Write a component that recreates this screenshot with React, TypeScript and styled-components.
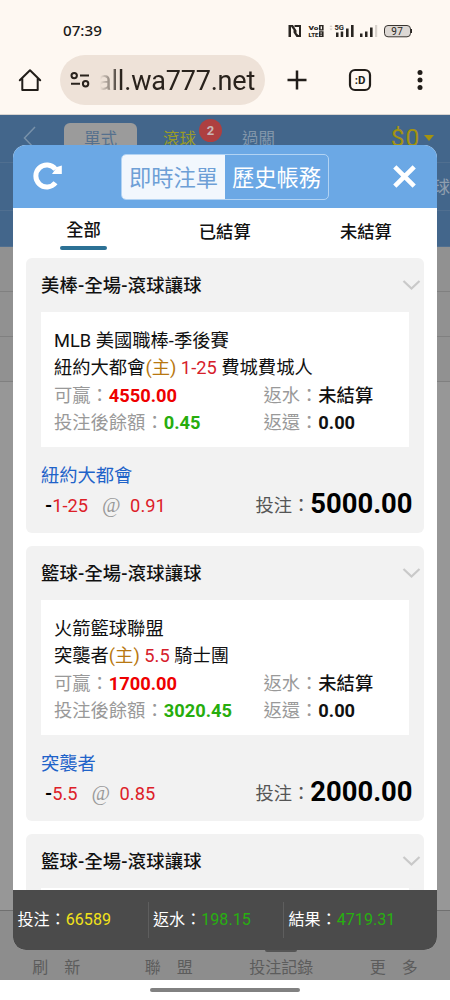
import React from "react";
import styled, { createGlobalStyle } from "styled-components";

const GlobalStyle = createGlobalStyle`
  * { box-sizing: border-box; }
  body { margin: 0; background: #fff; }
  #root { font-family: Roboto, "Noto Sans CJK TC", sans-serif; font-size: 18.3px; color: #111; }
`;

const Phone = styled.div`
  width: 450px;
  height: 1000px;
  display: flex;
  flex-direction: column;
  overflow: hidden;
  background: #fff;
`;

/* ---------- device and browser chrome ---------- */
const StatusBar = styled.div`
  height: 54px;
  padding: 7px 38px 0 63px;
  display: flex;
  align-items: center;
  justify-content: space-between;
  background: #fef8f2;
`;
const Clock = styled.span`
  margin-top: -1px;
  font-family: "Noto Sans", sans-serif;
  font-size: 15.2px;
  font-weight: 500;
  color: #1c1a18;
`;
const BrowserBar = styled.div`
  height: 61px;
  padding: 1px 0 0 18px;
  display: flex;
  align-items: flex-start;
  background: #fef8f2;
  border-bottom: 1px solid #d9d5d1;
`;
const UrlPill = styled.div`
  width: 205px;
  height: 50px;
  margin-left: 18px;
  padding-left: 10px;
  border-radius: 25px;
  background: #eee2d8;
  display: flex;
  align-items: center;
`;
const UrlText = styled.span`
  margin: 2px 0 0 7px;
  white-space: nowrap;
  font-size: 27px;
  line-height: 36px;
  letter-spacing: -0.2px;
  color: #29221c;
  mask-image: linear-gradient(90deg, transparent 3px, #000 24px);
`;
const BarIcon = styled.div<{ $left: number; $w: number }>`
  width: ${(p) => p.$w}px;
  height: 50px;
  margin-left: ${(p) => p.$left}px;
  display: flex;
  align-items: center;
  justify-content: center;
`;

/* ---------- page behind the dialog ---------- */
const Page = styled.main`
  position: relative;
  height: 865px;
  display: flex;
  flex-direction: column;
  background: #979797;
`;
const SiteBar = styled.div`
  height: 48px;
  display: flex;
  align-items: flex-start;
  padding-left: 22px;
  background: #43668b;
  border-bottom: 1px solid #506f90;
`;
const ModeTab = styled.div<{ $w: number; $on?: boolean; $color: string }>`
  width: ${(p) => p.$w}px;
  height: 38px;
  margin-top: 8px;
  border-radius: 6px;
  text-align: center;
  font-size: 16.5px;
  line-height: 34px;
  color: ${(p) => p.$color};
  background: ${(p) => (p.$on ? "#9b9b9b" : "transparent")};
`;
const TabLabel = styled.span`
  position: relative;
`;
const CountBadge = styled.span`
  position: absolute;
  top: -11px;
  right: -26px;
  width: 23px;
  height: 23px;
  border-radius: 50%;
  background: #ae3f40;
  color: #c9b5b5;
  font-size: 13px;
  font-weight: 700;
  line-height: 23px;
  text-align: center;
`;
const Balance = styled.div`
  margin-left: auto;
  padding: 8px 16px 0 0;
  display: flex;
  align-items: center;
  gap: 4px;
  font-size: 24.5px;
  line-height: 30px;
  letter-spacing: 0.8px;
  color: #a4930f;
`;
const SportRow = styled.div<{ $h: number }>`
  height: ${(p) => p.$h}px;
  padding-top: 8px;
  text-align: right;
  font-size: 17px;
  line-height: 32px;
  color: #8f9faf;
  background: #43668b;
  border-bottom: 1px solid #506f90;
  overflow: hidden;
`;
const MarketRow = styled.div`
  height: 45px;
  background: #919191;
  border-bottom: 1px solid #808080;
`;
const TabBar = styled.nav`
  height: 70px;
  margin-top: auto;
  padding: 38px 0 0;
  display: flex;
  background: #8d8d8d;
  border-top: 1px solid #707070;
`;
const NavItem = styled.div`
  flex: 1;
  text-align: center;
  white-space: pre;
  font-size: 16px;
  line-height: 37px;
  color: #5c5c5c;
`;
const NavMark = styled.span`
  position: absolute;
  left: 265px;
  bottom: 28px;
  width: 32px;
  height: 4px;
  border-radius: 2px;
  background: #555;
`;

/* ---------- betting slip dialog ---------- */
const Dialog = styled.section`
  position: absolute;
  left: 13px;
  top: 30px;
  width: 423.5px;
  height: 805px;
  display: flex;
  flex-direction: column;
  border-radius: 13px;
  overflow: hidden;
  background: #fff;
`;
const DialogHead = styled.header`
  flex: none;
  height: 62.5px;
  padding: 0 20px 0 20px;
  display: flex;
  align-items: center;
  background: #6ba8e5;
`;
const Segments = styled.div`
  width: 208px;
  height: 46px;
  margin: 1px 64px 0 58px;
  display: flex;
  border: 1px solid #b2d3f3;
  border-radius: 5px;
  overflow: hidden;
`;
const Segment = styled.div<{ $on?: boolean }>`
  flex: 1;
  text-align: center;
  font-size: 22.3px;
  line-height: 46px;
  color: ${(p) => (p.$on ? "#6e9fd6" : "#fff")};
  background: ${(p) => (p.$on ? "#f2f7fd" : "transparent")};
`;
const FilterRow = styled.div`
  flex: none;
  height: 50px;
  display: flex;
`;
const Filter = styled.div<{ $on?: boolean }>`
  flex: 1;
  display: flex;
  flex-direction: column;
  align-items: center;
  font-size: 17.3px;
  font-weight: 500;
  line-height: ${(p) => (p.$on ? 45 : 49)}px;
  color: #111;
`;
const Underline = styled.span`
  width: 47px;
  height: 4px;
  margin-top: -7px;
  border-radius: 2px;
  background: #2c7195;
`;
const BetList = styled.div`
  flex: 1;
  min-height: 0;
  padding: 0 13px;
  display: flex;
  flex-direction: column;
  gap: 13px;
  overflow: hidden;
`;
const Card = styled.article`
  flex: none;
  height: 275px;
  border-radius: 6px;
  padding: 0 15px 0 15px;
  background: #f2f2f2;
`;
const CardHead = styled.div`
  height: 54.5px;
  padding-bottom: 1px;
  margin-right: -12px;
  display: flex;
  align-items: center;
  justify-content: space-between;
  font-weight: 500;
  letter-spacing: 0.2px;
`;
const DetailBox = styled.div`
  height: 135px;
  padding: 14.5px 13px 10px;
  line-height: 27.5px;
  white-space: nowrap;
  background: #fff;
`;
const DetailRow = styled.div`
  display: flex;
  height: 27.5px;
`;
const DetailCell = styled.div<{ $w?: number }>`
  width: ${(p) => (p.$w ? `${p.$w}px` : "auto")};
  color: #999;
`;
const Ink = styled.span<{ $c: string; $bold?: boolean }>`
  color: ${(p) => p.$c};
  font-weight: ${(p) => (p.$bold ? 700 : 400)};
`;
const Pick = styled.div`
  height: 26px;
  margin-top: 15px;
  line-height: 27px;
  color: #1f63c9;
`;
const BetRow = styled.div`
  height: 36px;
  padding-left: 4px;
  margin: -3px -4px 0 0;
  display: flex;
  align-items: baseline;
  line-height: 36px;
`;
const AtSign = styled.span`
  width: 18px;
  margin: 0 10px 0 14px;
  font-family: "Liberation Serif", serif;
  font-style: italic;
  font-size: 20px;
  color: #999;
`;
const Stake = styled.span`
  margin-left: auto;
  color: #555;
`;
const StakeValue = styled.span`
  position: relative;
  top: 1px;
  font-size: 27.4px;
  font-weight: 700;
  color: #000;
`;
const Totals = styled.footer`
  flex: none;
  height: 60px;
  padding-top: 12px;
  display: flex;
  background: #4b4b4b;
`;
const Total = styled.div`
  width: 135.5px;
  height: 36px;
  padding-left: 4.5px;
  border-right: 1px solid #5e5e5e;
  font-size: 16.1px;
  line-height: 36px;
  white-space: nowrap;
  color: #fff;
  &:last-child { width: 150px; border-right: 0; }
`;
const GestureArea = styled.div`
  flex: 1;
  display: flex;
  justify-content: center;
  padding-top: 7.5px;
`;
const GestureBar = styled.span`
  width: 150px;
  height: 4px;
  border-radius: 2px;
  background: #818181;
`;

const StatusIcons = () => (
  <svg width="125" height="18" viewBox="287 21 125 18" fill="#292521">
    <path d="M288.5 24H293l3.500 5.500V33l-5.500-7.500V36h-2.500zM294.500 24h6.500v12h-4.500l-3-4.500V29l4.800 5h.7v-8h-4.500z" />
    <g fontFamily="Roboto" fontWeight="900">
      <text x="308.500" y="29.400" fontSize="5.800" textLength="10" lengthAdjust="spacingAndGlyphs">Vo</text>
      <text x="308.500" y="36.400" fontSize="5.800" textLength="10" lengthAdjust="spacingAndGlyphs">LTE</text>
      <text x="334.500" y="28.800" fontSize="7.800" fontWeight="700" textLength="9.500" lengthAdjust="spacingAndGlyphs">5G</text>
    </g>
    <path fillRule="evenodd" d="M319 24h4.600v5.500H319zm1.600 1.200v3h1.400v-3zM319 30.300h4.600V36H319zm1.400 1.200v1h1.500v-1zm0 2.200v1h1.500v-1z" />
    <path d="M329.500 26l1.500-2 1.500 2zm0 1.500h3l-1.500 2z" fill="#d6cfca" />
    <path d="M336 31.500h2.500V36H336zM340.700 30.500h2.500V36h-2.500zM346 27.500h2.600V36H346zM351 24h2.600v12H351z" />
    <path d="M360 32.500h2.500V36H360zM365 30.500h2.500V36H365zM370 26.500h2.600V36H370z" />
    <path d="M375 24h2.200v12H375z" fill="#d8d2cc" />
    <rect x="384.500" y="24.500" width="26" height="11.300" rx="3.500" fill="#ddd8d4" stroke="#393531" />
    <path d="M411 28h1v4h-1z" />
    <text x="391.300" y="33.800" fontFamily="Roboto" fontSize="10" textLength="11.500">97</text>
  </svg>
);

const Chevron = () => (
  <svg width="19" height="12" viewBox="0 0 19 12" fill="none" stroke="#c9c9c9" strokeWidth="2.2">
    <path d="M1.500 3 9.500 10.500 17.500 3" />
  </svg>
);

interface Bet {
  title: string;
  league: string;
  home: string;
  line: string;
  away: string;
  win: string;
  left: string;
  handicap: string;
  odds: string;
  stake: string;
}

const bets: Bet[] = [
  { title: "美棒-全場-滾球讓球", league: "MLB 美國職棒-季後賽", home: "紐約大都會", line: "1-25", away: "費城費城人", win: "4550.00", left: "0.45", handicap: "1-25", odds: "0.91", stake: "5000.00" },
  { title: "籃球-全場-滾球讓球", league: "火箭籃球聯盟", home: "突襲者", line: "5.5", away: "騎士團", win: "1700.00", left: "3020.45", handicap: "5.5", odds: "0.85", stake: "2000.00" },
];

const BetCard = ({ bet }: { bet: Bet }) => (
  <Card>
    <CardHead>{bet.title}<Chevron /></CardHead>
    <DetailBox>
      <DetailRow>{bet.league}</DetailRow>
      <DetailRow>
        <span>
          {bet.home}<Ink $c="#b87811">(主)</Ink> <Ink $c="#d6202b">{bet.line}</Ink> {bet.away}
        </span>
      </DetailRow>
      <DetailRow>
        <DetailCell $w={209.5}>可贏：<Ink $c="#ee0000" $bold>{bet.win}</Ink></DetailCell>
        <DetailCell>返水：<Ink $c="#111" style={{ fontWeight: 500 }}>未結算</Ink></DetailCell>
      </DetailRow>
      <DetailRow>
        <DetailCell $w={209.5}>投注後餘額：<Ink $c="#27ad0d" $bold>{bet.left}</Ink></DetailCell>
        <DetailCell>返還：<Ink $c="#111" $bold>0.00</Ink></DetailCell>
      </DetailRow>
    </DetailBox>
    <Pick>{bet.home}</Pick>
    <BetRow>
      <Ink $c="#000" $bold>-</Ink>
      <Ink $c="#dd2028">{bet.handicap}</Ink>
      <AtSign>@</AtSign>
      <Ink $c="#dd2028">{bet.odds}</Ink>
      <Stake>投注：<StakeValue>{bet.stake}</StakeValue></Stake>
    </BetRow>
  </Card>
);

export default function App() {
  return (
    <>
      <GlobalStyle />
      <Phone lang="zh-Hant">
        <StatusBar><Clock>07:39</Clock><StatusIcons /></StatusBar>
        <BrowserBar>
          <BarIcon $left={0} $w={24}>
            <svg width="24" height="24" viewBox="0 0 24 24" fill="none" stroke="#211d19" strokeWidth="2" strokeLinejoin="round" strokeLinecap="round">
              <path d="M1.800 12.200 12 2.200l10.200 10M4.300 10.500V22h15.400V10.500" />
            </svg>
          </BarIcon>
          <UrlPill>
            <svg width="20" height="18" viewBox="0 0 20 18" fill="none" stroke="#29221c" strokeWidth="2">
              <circle cx="4.2" cy="4.6" r="2.7" /><circle cx="15.6" cy="12.8" r="2.7" />
              <path d="M10 4.600h9M1 12.800h9" />
            </svg>
            <UrlText>all.wa777.net</UrlText>
          </UrlPill>
          <BarIcon $left={20} $w={24}>
            <svg width="22" height="22" viewBox="0 0 22 22" fill="none" stroke="#211d19" strokeWidth="2.5"><path d="M1.500 11h19M11 1.500v19" /></svg>
          </BarIcon>
          <BarIcon $left={39} $w={24}>
            <svg width="24" height="24" viewBox="0 0 24 24" fill="none" stroke="#211d19" strokeWidth="2.2">
              <rect x="2" y="2" width="20" height="20" rx="5" />
              <text x="12" y="16" textAnchor="middle" fontFamily="Roboto" fontWeight="700" fontSize="11.5" fill="#211d19" stroke="none">:D</text>
            </svg>
          </BarIcon>
          <BarIcon $left={36} $w={24}>
            <svg width="8" height="22" viewBox="0 0 8 22" fill="#211d19"><circle cx="4" cy="3.4" r="2.5" /><circle cx="4" cy="11" r="2.5" /><circle cx="4" cy="18.6" r="2.5" /></svg>
          </BarIcon>
        </BrowserBar>

        <Page>
          <SiteBar>
            <svg width="42" height="44" viewBox="0 0 42 44" fill="none" stroke="#7891a9" strokeWidth="1.5"><path d="M13 12 2.500 23 13 34" /></svg>
            <ModeTab $w={73} $on $color="#55708d">單式</ModeTab>
            <ModeTab $w={85} $color="#999b28"><TabLabel>滾球<CountBadge>2</CountBadge></TabLabel></ModeTab>
            <ModeTab $w={73} $color="#8296aa">過關</ModeTab>
            <Balance>$0<svg width="10" height="6" viewBox="0 0 10 6" fill="#a4930f"><path d="M0 0h10L5 6z" /></svg></Balance>
          </SiteBar>
          <SportRow $h={48}>球</SportRow>
          <SportRow $h={36} />
          <MarketRow /><MarketRow /><MarketRow />
          <TabBar>
            <NavItem>{"刷\u3000新"}</NavItem>
            <NavItem>{"聯\u3000盟"}</NavItem>
            <NavItem>投注記錄</NavItem>
            <NavItem>{"更\u3000多"}</NavItem>
          </TabBar>
          <NavMark />

          <Dialog>
            <DialogHead>
              <svg width="30" height="30" viewBox="0 0 30 30">
                <path d="M22.500 8.200A11 11 0 1 0 22.500 21.800" fill="none" stroke="#fff" strokeWidth="5" />
                <path d="M28.800 4.500V13H19l5-7z" fill="#fff" />
              </svg>
              <Segments><Segment $on>即時注單</Segment><Segment>歷史帳務</Segment></Segments>
              <svg width="23" height="23" viewBox="0 0 23 23" stroke="#fff" strokeWidth="4.6"><path d="M1.800 1.800l19.400 19.400M21.200 1.800 1.800 21.200" /></svg>
            </DialogHead>
            <FilterRow>
              <Filter $on>全部<Underline /></Filter>
              <Filter>已結算</Filter>
              <Filter>未結算</Filter>
            </FilterRow>
            <BetList>
              {bets.map((b) => <BetCard key={b.title} bet={b} />)}
              <Card><CardHead>籃球-全場-滾球讓球<Chevron /></CardHead><DetailBox /></Card>
            </BetList>
            <Totals>
              <Total>投注：<Ink $c="#f2e21a">66589</Ink></Total>
              <Total>返水：<Ink $c="#27b010">198.15</Ink></Total>
              <Total>結果：<Ink $c="#27b010">4719.31</Ink></Total>
            </Totals>
          </Dialog>
        </Page>
        <GestureArea><GestureBar /></GestureArea>
      </Phone>
    </>
  );
}
